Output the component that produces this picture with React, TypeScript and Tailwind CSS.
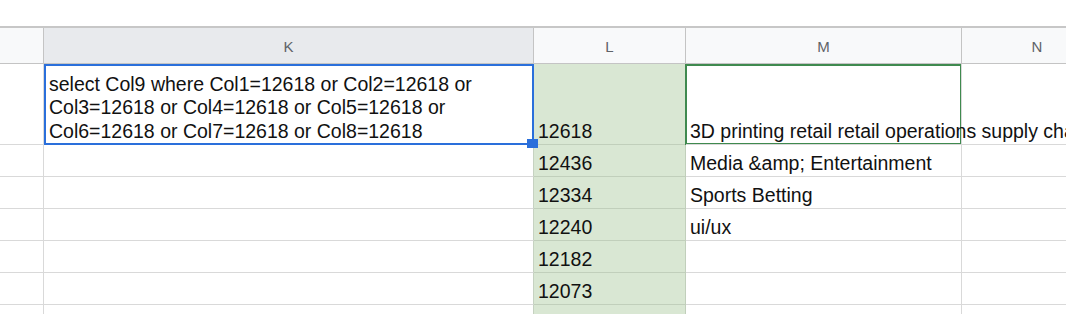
import React from "react";

const rows: { l: string; m: string }[] = [
  { l: "12436", m: "Media &amp; Entertainment" },
  { l: "12334", m: "Sports Betting" },
  { l: "12240", m: "ui/ux" },
  { l: "12182", m: "" },
  { l: "12073", m: "" },
  { l: "", m: "" },
];

export default function App() {
  return (
    <div className="relative w-[1066px] h-[314px] overflow-hidden bg-white font-['Liberation_Sans',Arial,sans-serif] text-[#111]">
      <div className="h-[26px]" />
      <div className="h-[2px] bg-[#c7c7c7]" />
      {/* header */}
      <div className="flex h-[36px] border-b border-[#c4c4c4] text-[15px] text-[#5f6368]">
        <div className="w-[44px] shrink-0 bg-[#f8f9fa] border-r border-[#c4c4c4]" />
        <div className="w-[490px] shrink-0 bg-[#e8eaed] border-r border-[#c4c4c4] flex items-center justify-center pt-[3px]">K</div>
        <div className="w-[152px] shrink-0 bg-[#f8f9fa] border-r border-[#c4c4c4] flex items-center justify-center pt-[3px]">L</div>
        <div className="w-[276px] shrink-0 bg-[#f8f9fa] border-r border-[#c4c4c4] flex items-center justify-center pt-[3px]">M</div>
        <div className="w-[150px] shrink-0 bg-[#f8f9fa] flex items-center justify-center pt-[3px]">N</div>
      </div>
      {/* body */}
      <div className="relative text-[19.5px] leading-[23.5px]">
        <div className="flex h-[81px]">
          <div className="w-[44px] shrink-0 border-r border-b border-[#d9d9d9]" />
          <div className="w-[490px] shrink-0 border-r border-b border-[#d9d9d9] border-r-[#c6d2c1] flex flex-col justify-end pl-[5px] pb-[1px]">
            <span>select Col9 where Col1=12618 or Col2=12618 or</span>
            <span>Col3=12618 or Col4=12618 or Col5=12618 or</span>
            <span>Col6=12618 or Col7=12618 or Col8=12618</span>
          </div>
          <div className="w-[152px] shrink-0 bg-[#d9e7d3] border-r border-b border-[#c1cfbb] flex items-end pl-[4px] pb-[1px]">12618</div>
          <div className="relative z-10 w-[276px] shrink-0 border-r border-b border-[#d9d9d9] flex items-end pl-[4px] pb-[1px] whitespace-nowrap overflow-visible">
            3D printing retail retail operations supply chain
          </div>
          <div className="w-[150px] shrink-0 border-b border-[#d9d9d9]" />
        </div>
        {rows.map((r, i) => (
          <div key={i} className="flex h-[32px]">
            <div className="w-[44px] shrink-0 border-r border-b border-[#d9d9d9]" />
            <div className="w-[490px] shrink-0 border-r border-b border-[#d9d9d9] border-r-[#c6d2c1]" />
            <div className="w-[152px] shrink-0 bg-[#d9e7d3] border-r border-b border-[#c1cfbb] flex items-end pl-[4px] pb-[1px]">{r.l}</div>
            <div className="w-[276px] shrink-0 border-r border-b border-[#d9d9d9] flex items-end pl-[4px] pb-[1px] whitespace-nowrap">{r.m}</div>
            <div className="w-[150px] shrink-0 border-b border-[#d9d9d9]" />
          </div>
        ))}
        {/* selection overlays */}
        <div className="absolute left-[44px] top-0 w-[490px] h-[81px] border-2 border-[#2a6fdb] pointer-events-none" />
        <div className="absolute left-[527px] top-[75px] w-[11px] h-[9px] bg-[#2a6fdb]" />
        <div className="absolute left-[685px] top-0 w-[277px] h-[81px] border-2 border-[#3f8a4f] pointer-events-none" />
      </div>
    </div>
  );
}
